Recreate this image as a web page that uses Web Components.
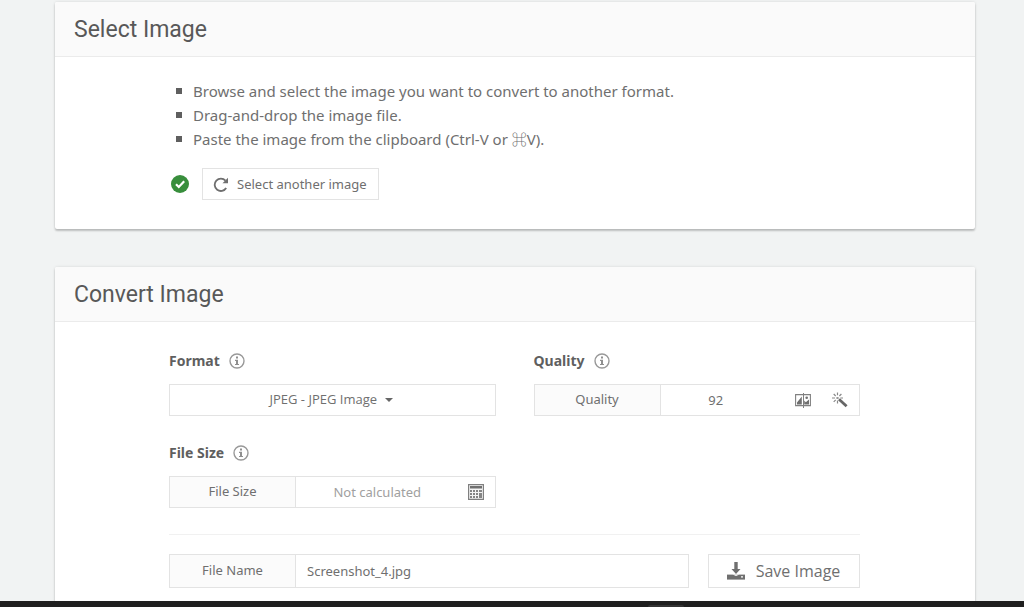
<!DOCTYPE html>
<html lang="en">
<head>
<meta charset="utf-8">
<meta name="viewport" content="width=device-width, initial-scale=1">
<title>Convert Image</title>
<style>
  html, body { height: 100%; margin: 0; }
  body {
    --text-font: "Noto Sans", "Noto Sans CJK JP", sans-serif;
    background: #f1f3f3;
    color: #6f6f6f;
    font-family: var(--text-font);
    font-size: 14px;
    line-height: 20px;
  }
</style>
</head>
<body>
<converter-app></converter-app>

<template id="app">
  <style>
    :host { display: flex; flex-direction: column; height: 100vh; overflow: hidden; }
    main { flex: 1; min-height: 0; overflow: hidden; padding: 2px 49px 0 55px; box-sizing: border-box; }
    section-card + section-card { margin-top: 38px; }
    ul { list-style: none; margin: 0; padding: 0 0 0 7px; font-size: 15px; line-height: 24px; }
    li { display: flex; align-items: center; gap: 11px; }
    li::before { content: ""; width: 6px; height: 6px; background: #5f5f5f; }
    .pick { display: flex; align-items: center; gap: 13px; margin: 17px 0 0 2px; }
    .columns { display: grid; grid-template-columns: 1fr 1fr; column-gap: 38px; row-gap: 26px; }
    .quality { --trail: 35px; }
    .file-size { --trail: 20px; }
    hr { border: 0; border-top: 1px solid #f1f1f1; margin: 26px 0 19px; }
    .save { display: grid; grid-template-columns: 1fr 152px; gap: 19px; padding-bottom: 30px; }
    footer { height: 6px; background: #1f1f1f; display: flex; justify-content: center; padding-left: 308px; box-sizing: border-box; }
    footer span { width: 36px; height: 2px; margin-top: 4px; background: #333; border-radius: 2px 2px 0 0; }
  </style>
  <main>
    <section-card heading="Select Image">
      <ul>
        <li>Browse and select the image you want to convert to another format.</li>
        <li>Drag-and-drop the image file.</li>
        <li>Paste the image from the clipboard (Ctrl-V or ⌘V).</li>
      </ul>
      <div class="pick">
        <ui-icon name="check"></ui-icon>
        <icon-button icon="reload">Select another image</icon-button>
      </div>
    </section-card>
    <section-card heading="Convert Image">
      <div class="columns">
        <labelled-field caption="Format"><format-select></format-select></labelled-field>
        <labelled-field caption="Quality">
          <addon-input class="quality" caption="Quality" value="92" align="center" actions="compare wand"></addon-input>
        </labelled-field>
        <labelled-field caption="File Size">
          <addon-input class="file-size" caption="File Size" value="Not calculated" align="center" muted actions="calculator"></addon-input>
        </labelled-field>
      </div>
      <hr>
      <div class="save">
        <addon-input caption="File Name" value="Screenshot_4.jpg" size="large"></addon-input>
        <icon-button icon="save" size="large">Save Image</icon-button>
      </div>
    </section-card>
  </main>
  <footer><span></span></footer>
</template>

<script>
const icons = {
  check: [18, 18, `<circle cx="9" cy="9" r="9" fill="#388e3c"/><path d="M5 9.2l2.8 2.8L13.2 6.3" fill="none" stroke="#fff" stroke-width="2.2"/>`],
  reload: [16, 16, `<path d="M13.2 12A6.2 6.2 0 1 1 12.5 4.6" fill="none" stroke="currentColor" stroke-width="1.8"/><path d="M15 1.8v5.4H9.5z" fill="currentColor"/>`],
  info: [16, 16, `<circle cx="8" cy="8" r="7" fill="none" stroke="#999" stroke-width="1.4"/><path d="M7 3.6h2v2H7zM6 6.7h3v4.2h1v1.2H6v-1.2h1V7.9H6z" fill="#8f8f8f"/>`],
  compare: [16, 16, `<path d="M.6 2.6h14.8v11H.6z" fill="none" stroke="#808080" stroke-width="1.1"/><path d="M2 12.4V10.4l4.8-5.9v7.9zM9.2 8.6l1.6 1.6 3.2-2.8v5H9.2z" fill="#6f6f6f"/><circle cx="11.7" cy="5.7" r="1.3" fill="#6f6f6f"/><path d="M8.5 1v15" stroke="#808080" stroke-width="1"/>`],
  wand: [16, 16, `<path d="M7 7.2l7.6 7" stroke="#666" stroke-width="2.8"/><path d="M5.5 .4v2.8M5.5 8.6v3M0 6h3M8.3 6H11M1.7 2l2 2M9.4 2l-2 2M1.7 9.8l2-2" stroke="#888" stroke-width="1.2"/><path d="M4.4 4.9h2.2v2.2H4.4z" fill="#999"/>`],
  calculator: [16, 16, `<path d="M.6.6h14.8v14.8H.6z" fill="#f5f5f5" stroke="#808080" stroke-width="1.2"/><path d="M2 2h12v2.5H2z" fill="#707070"/><path d="M2 6h2v2H2zM5 6h2v2H5zM8 6h2v2H8zM11 6h3v2h-3zM2 9h2v2H2zM5 9h2v2H5zM8 9h2v2H8zM2 12h2v2H2zM5 12h2v2H5zM8 12h2v2H8zM11 9h3v5h-3z" fill="#858585"/>`],
  save: [18, 18, `<path d="M7.3 0h3.4v7h2.8L9 12 4.5 7h2.8z" fill="currentColor"/><path d="M0 12.6h18v5H0z" fill="currentColor"/><path d="M5.5 12.6h7L9 14z" fill="#fff"/><path d="M14 14.2h2v1.3h-2z" fill="#fff"/>`]
};

class UiIcon extends HTMLElement {
  connectedCallback() {
    const [w, h, body] = icons[this.getAttribute('name')];
    this.attachShadow({ mode: 'open' }).innerHTML =
      `<style>:host{display:inline-flex;flex:none}svg{display:block}</style>
       <svg width="${w}" height="${h}" viewBox="0 0 ${w} ${h}" aria-hidden="true">${body}</svg>`;
  }
}

class SectionCard extends HTMLElement {
  connectedCallback() {
    this.attachShadow({ mode: 'open' }).innerHTML = `
      <style>
        :host { display: block; background: #fff; border-radius: 2px; overflow: hidden;
          box-shadow: 0 2px 2px rgba(0,0,0,.2), 0 0 3px rgba(0,0,0,.12); }
        header { background: #fafafa; border-bottom: 1px solid #ebebeb; padding: 12px 19px 10px; }
        h2 { margin: 0; font: 400 23px/32px Roboto, sans-serif; color: #585858; }
        .body { padding: 22px 115px 29px 114px; }
        :host([heading="Convert Image"]) .body { padding-top: 28px; }
      </style>
      <header><h2>${this.getAttribute('heading')}</h2></header>
      <div class="body"><slot></slot></div>`;
  }
}

class IconButton extends HTMLElement {
  connectedCallback() {
    this.attachShadow({ mode: 'open' }).innerHTML = `
      <style>
        :host { display: block; }
        button { display: flex; align-items: center; justify-content: center; gap: 8px; width: 100%;
          height: 32px; box-sizing: border-box; padding: 0 11px 0 10px; border: 1px solid #e3e3e3; background: #fff;
          color: #6f6f6f; font: 13px/20px var(--text-font); white-space: nowrap; cursor: pointer; }
        :host([size="large"]) button { height: 34px; font: 16px/20px "Open Sans", sans-serif; gap: 11px; }
      </style>
      <button type="button"><ui-icon name="${this.getAttribute('icon')}"></ui-icon><span><slot></slot></span></button>`;
  }
}

class LabelledField extends HTMLElement {
  connectedCallback() {
    this.attachShadow({ mode: 'open' }).innerHTML = `
      <style>
        :host { display: block; min-width: 0; }
        .caption { display: flex; align-items: center; gap: 9px; margin-bottom: 12px;
          font-size: 14px; font-weight: 700; line-height: 22px; color: #5f5f5f; }
      </style>
      <div class="caption"><span>${this.getAttribute('caption')}</span><ui-icon name="info"></ui-icon></div>
      <slot></slot>`;
  }
}

class FormatSelect extends HTMLElement {
  connectedCallback() {
    this.attachShadow({ mode: 'open' }).innerHTML = `
      <style>
        :host { display: block; position: relative; }
        select { appearance: none; display: block; width: 100%; height: 32px; box-sizing: border-box; margin: 0;
          padding: 0 18px 2px 0; border: 1px solid #e3e3e3; border-radius: 0; background: #fff; color: #6f6f6f;
          font: 13px/20px "Open Sans", sans-serif; text-align: center; text-align-last: center; }
        svg { position: absolute; top: 14px; left: calc(50% + 53px); pointer-events: none; }
      </style>
      <select aria-label="Format"><option>JPEG - JPEG Image</option></select>
      <svg width="8" height="4" viewBox="0 0 8 4" aria-hidden="true"><path d="M0 0h8L4 4z" fill="#666"/></svg>`;
  }
}

class AddonInput extends HTMLElement {
  connectedCallback() {
    const caption = this.getAttribute('caption');
    const actions = (this.getAttribute('actions') || '').split(' ').filter(Boolean);
    const muted = this.hasAttribute('muted');
    this.attachShadow({ mode: 'open' }).innerHTML = `
      <style>
        :host { display: flex; height: 32px; box-sizing: border-box; border: 1px solid #e3e3e3; background: #fff; min-width: 0; }
        :host([size="large"]) { height: 34px; }
        label { display: flex; align-items: center; justify-content: center; flex: none; width: 126px; box-sizing: border-box;
          border-right: 1px solid #e3e3e3; background: #fbfbfb; font-size: 13px; line-height: 20px; padding-bottom: 2px; }
        input { flex: 1; min-width: 0; width: 0; box-sizing: border-box; margin: 0; padding: 0 var(--trail, 11px) 0 11px; border: 0; background: none;
          color: #6f6f6f; font: 13px/20px var(--text-font); outline: 0; }
        :host([align="center"]) input { text-align: center; }
        :host([muted]) input { color: #a0a0a0; }
        .actions { display: flex; align-items: center; gap: 21px; padding-right: 11px; }
        button { display: flex; padding: 0; border: 0; background: none; cursor: pointer; }
      </style>
      <label for="field">${caption}</label>
      <input id="field" type="text" value="${this.getAttribute('value')}"${muted ? ' readonly' : ''}>
      ${actions.length ? `<div class="actions">${actions.map(a =>
        `<button type="button" aria-label="${a}"><ui-icon name="${a}"></ui-icon></button>`).join('')}</div>` : ''}`;
  }
}

class ConverterApp extends HTMLElement {
  connectedCallback() {
    this.attachShadow({ mode: 'open' })
      .append(document.getElementById('app').content.cloneNode(true));
  }
}

customElements.define('ui-icon', UiIcon);
customElements.define('section-card', SectionCard);
customElements.define('icon-button', IconButton);
customElements.define('labelled-field', LabelledField);
customElements.define('format-select', FormatSelect);
customElements.define('addon-input', AddonInput);
customElements.define('converter-app', ConverterApp);
</script>
</body>
</html>
